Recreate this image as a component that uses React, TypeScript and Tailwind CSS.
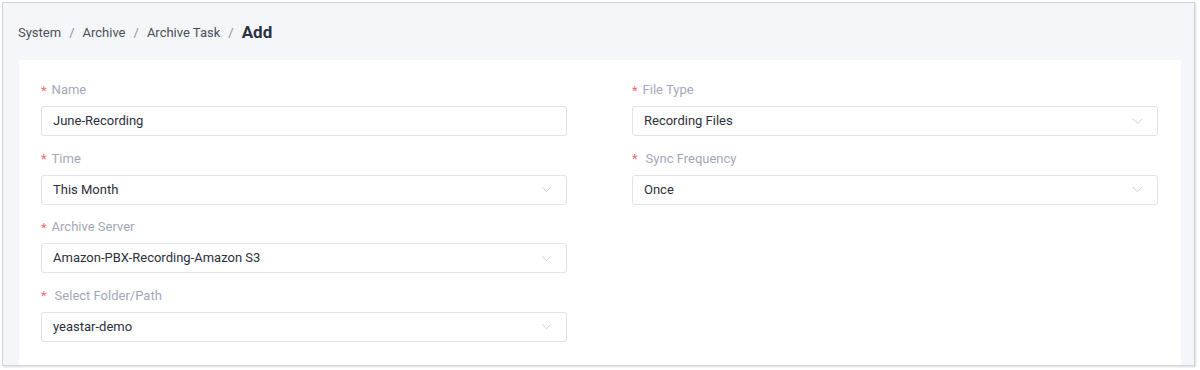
import { ChevronDown } from 'lucide-react';

type Field = {
  label: string;
  value: string;
  select?: boolean;
  wide?: boolean;
};

const left: Field[] = [
  { label: 'Name', value: 'June-Recording' },
  { label: 'Time', value: 'This Month', select: true },
  { label: 'Archive Server', value: 'Amazon-PBX-Recording-Amazon S3', select: true },
  { label: 'Select Folder/Path', value: 'yeastar-demo', select: true, wide: true },
];

const right: Field[] = [
  { label: 'File Type', value: 'Recording Files', select: true },
  { label: 'Sync Frequency', value: 'Once', select: true, wide: true },
];

function FormItem({ field }: { field: Field }) {
  return (
    <div className="h-[68.5px]">
      <div className="flex items-center h-[22px] text-[13px] text-[#a3a8b8]">
        <span className="text-[#f56c6c] mr-[5px] text-[13px] leading-none">*</span>
        <span className={field.wide ? 'ml-[3px]' : ''}>{field.label}</span>
      </div>
      <div className="mt-[5px] h-[30px] border border-[#e1e3ea] rounded-[3px] bg-white flex items-center pl-[11px] pr-[11px]">
        <span className="flex-1 text-[13px] text-[#2c303c]">{field.value}</span>
        {field.select && <ChevronDown size={17} strokeWidth={1.1} className="text-[#bfc2cc]" />}
      </div>
    </div>
  );
}

export default function App() {
  return (
    <div className="w-[1200px] h-[370px] bg-white pt-[2px] pl-[2px]" style={{ fontFamily: 'Roboto, "Liberation Sans", sans-serif' }}>
      <div className="w-[1193px] h-[364px] border border-[#d2d3d6] bg-[#f5f6fa] shadow-[1px_1px_2px_rgba(0,0,0,0.15)] overflow-hidden">
        <div className="h-[57px] flex items-center pl-[15px] pt-[2px] text-[13px] text-[#4a4e5a]">
          <span>System</span>
          <span className="mx-[8px] text-[#8c90a0]">/</span>
          <span>Archive</span>
          <span className="mx-[8px] text-[#8c90a0]">/</span>
          <span>Archive Task</span>
          <span className="mx-[8px] text-[#8c90a0]">/</span>
          <span className="text-[17px] font-bold text-[#2b3044]">Add</span>
        </div>
        <div className="ml-[16px] w-[1162px] h-[310px] bg-white pt-[19px] pl-[22px] grid grid-cols-[526px_526px] gap-x-[65px]">
          <div>
            {left.map((f) => (
              <FormItem key={f.label} field={f} />
            ))}
          </div>
          <div>
            {right.map((f) => (
              <FormItem key={f.label} field={f} />
            ))}
          </div>
        </div>
      </div>
    </div>
  );
}
